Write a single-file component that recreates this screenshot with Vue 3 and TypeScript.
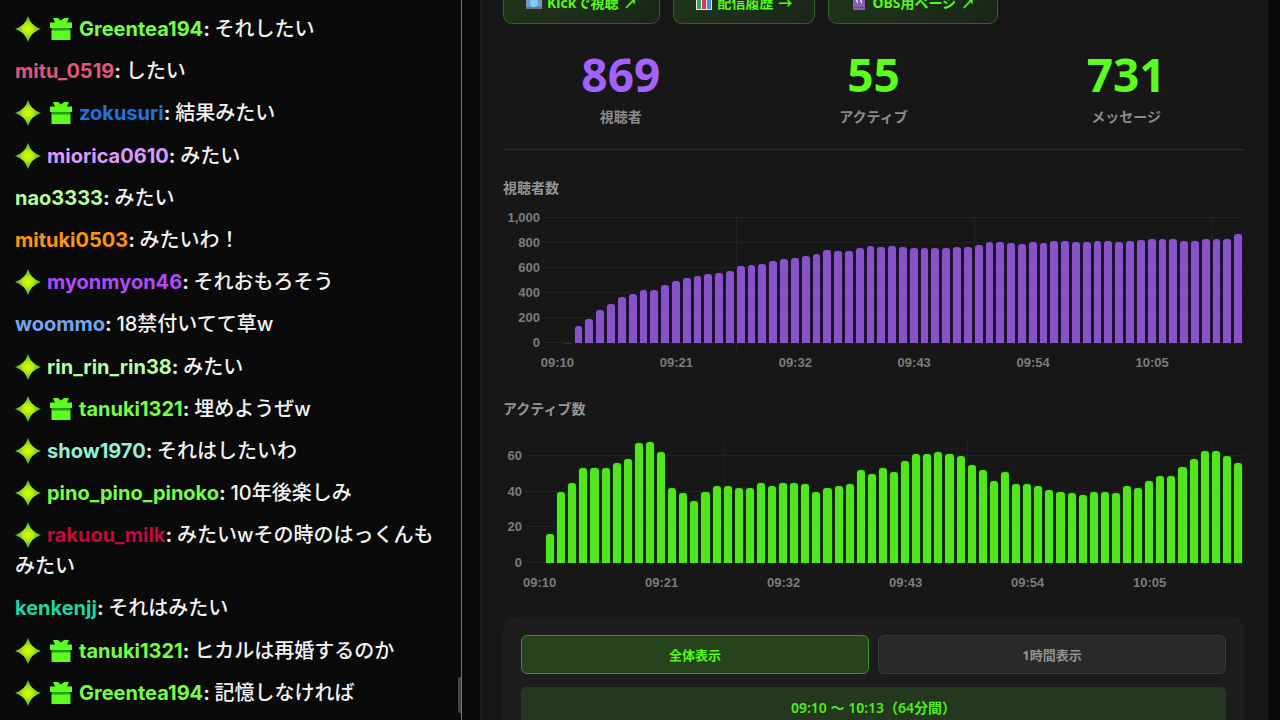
<script setup lang="ts">
interface Message { name: string; color: string; text: string; star?: boolean; gift?: boolean }
interface Chart {
  id: string
  title: string
  max: number
  values: number[]
  ticks: number[]
}

const messages: Message[] = [
  { name: 'Greentea194', color: '#75fd46', text: 'それしたい', star: true, gift: true },
  { name: 'mitu_0519', color: '#e0567f', text: 'したい' },
  { name: 'zokusuri', color: '#1f75e0', text: '結果みたい', star: true, gift: true },
  { name: 'miorica0610', color: '#d99bfb', text: 'みたい', star: true },
  { name: 'nao3333', color: '#b9fda0', text: 'みたい' },
  { name: 'mituki0503', color: '#fb9410', text: 'みたいわ！' },
  { name: 'myonmyon46', color: '#b04bfb', text: 'それおもろそう', star: true },
  { name: 'woommo', color: '#72a5ec', text: '18禁付いてて草w' },
  { name: 'rin_rin_rin38', color: '#b9fda0', text: 'みたい', star: true },
  { name: 'tanuki1321', color: '#75fd46', text: '埋めようぜw', star: true, gift: true },
  { name: 'show1970', color: '#93efd8', text: 'それはしたいわ', star: true },
  { name: 'pino_pino_pinoko', color: '#75fd46', text: '10年後楽しみ', star: true },
  { name: 'rakuou_milk', color: '#c20a3c', text: 'みたいwその時のはっくんもみたい', star: true },
  { name: 'kenkenjj', color: '#1fd6a0', text: 'それはみたい' },
  { name: 'tanuki1321', color: '#75fd46', text: 'ヒカルは再婚するのか', star: true, gift: true },
  { name: 'Greentea194', color: '#75fd46', text: '記憶しなければ', star: true, gift: true },
]

const stats = [
  { value: 869, label: '視聴者', tone: 'purple' },
  { value: 55, label: 'アクティブ', tone: 'green' },
  { value: 731, label: 'メッセージ', tone: 'green' },
]

const charts: Chart[] = [
  {
    id: 'viewers',
    title: '視聴者数',
    max: 1000,
    ticks: [1000, 800, 600, 400, 200, 0],
    values: [
      0, 4, 139, 195, 264, 315, 368, 392, 421, 421, 464, 493, 517, 539, 555, 563, 579, 613, 627, 635, 656, 669,
      683, 696, 712, 747, 736, 736, 760, 773, 771, 779, 765, 760, 760, 763, 760, 771, 768, 787, 805, 805, 797,
      792, 808, 803, 813, 816, 808, 811, 819, 813, 808, 819, 824, 832, 835, 832, 816, 819, 829, 829, 829, 869,
    ],
  },
  {
    id: 'active',
    title: 'アクティブ数',
    max: 70,
    ticks: [60, 40, 20, 0],
    values: [
      0, 16, 40, 45, 53, 53, 53, 56, 58, 67, 68, 62, 42, 39, 35, 40, 43, 43, 42, 42, 45, 43, 45, 45, 44, 40, 42,
      43, 44, 52, 50, 53, 51, 57, 61, 61, 62, 61, 60, 55, 52, 46, 51, 44, 44, 43, 41, 40, 39, 38, 40, 40, 39, 43,
      42, 46, 49, 49, 54, 58, 63, 63, 60, 56,
    ],
  },
]

const times = ['09:10', '09:21', '09:32', '09:43', '09:54', '10:05']
const verticals = [17, 39, 61]
const count = 64
const pct = (n: number): string => `${n * 100}%`
</script>

<template>
  <div class="page">
    <svg class="defs" aria-hidden="true">
      <defs>
        <radialGradient id="spark">
          <stop offset="0" stop-color="#dcff08" />
          <stop offset="0.35" stop-color="#b6ee12" />
          <stop offset="1" stop-color="#35b51e" />
        </radialGradient>
      </defs>
    </svg>

    <aside class="chat">
      <p v-for="(m, i) in messages" :key="i" class="message">
        <svg v-if="m.star" class="badge star" viewBox="0 0 26 26" aria-hidden="true">
          <path d="M13 0Q16 10 26 13Q16 16 13 26Q10 16 0 13Q10 10 13 0Z" fill="url(#spark)" />
        </svg>
        <svg v-if="m.gift" class="badge gift" viewBox="0 0 22 22" aria-hidden="true">
          <path d="M3 0H8L11 2.500L14 0H19L17 4.500H22V10H0V4.500H5Z" fill="#5cfc22" />
          <path d="M1.500 10H20.500V13H1.500Z" fill="#279c12" />
          <path d="M1.500 12.500H20.500V22H1.500Z" fill="#5cfc22" />
        </svg>
        <span class="name" :style="{ color: m.color }">{{ m.name }}</span><span class="colon">: </span>{{ m.text }}
      </p>
      <span class="thumb"></span>
    </aside>

    <main class="panel">
      <nav class="links">
        <a href="#kick" class="link">
          <svg class="emoji" viewBox="0 0 16 16" aria-hidden="true">
            <rect x="0" y="1" width="16" height="14" rx="1" fill="#8496a8" />
            <rect x="2" y="2" width="12" height="11" fill="#5a9edc" />
            <circle cx="8" cy="9" r="4" fill="#8ec8ee" />
            <path d="M0 13H16V15H0Z" fill="#79728c" />
          </svg>
          <span>Kickで視聴</span><span>↗</span>
        </a>
        <a href="#history" class="link">
          <svg class="emoji" viewBox="0 0 16 16" aria-hidden="true">
            <rect width="16" height="16" fill="#e8e8ee" />
            <rect x="1" y="6" width="4" height="9" fill="#37a35c" />
            <rect x="6" y="1" width="4" height="14" fill="#d9365a" />
            <rect x="11" y="4" width="4" height="11" fill="#4a8ad8" />
          </svg>
          <span>配信履歴</span><span>→</span>
        </a>
        <a href="#obs" class="link">
          <svg class="emoji" viewBox="0 0 16 16" aria-hidden="true">
            <rect x="2" y="0" width="12" height="16" rx="1" fill="#8462ac" />
            <path d="M5 5H7V9L6 10V8H5ZM9 5H11V9L10 10V8H9Z" fill="#d8c5ee" />
            <path d="M3 13H13V14H3Z" fill="#69488f" />
          </svg>
          <span>OBS用ページ</span><span>↗</span>
        </a>
      </nav>

      <section class="stats">
        <div v-for="s in stats" :key="s.label" class="stat">
          <strong :class="s.tone">{{ s.value }}</strong>
          <span>{{ s.label }}</span>
        </div>
      </section>

      <section v-for="c in charts" :key="c.id" class="chart" :class="c.id">
        <h2>{{ c.title }}</h2>
        <div class="plot">
          <div class="axis">
            <span v-for="t in c.ticks" :key="t" class="tick" :style="{ bottom: pct(t / c.max) }">{{ t.toLocaleString('en-US') }}</span>
          </div>
          <div class="area">
            <i v-for="t in c.ticks" :key="t" class="row" :style="{ bottom: pct(t / c.max) }"></i>
            <i v-for="v in verticals" :key="v" class="col" :style="{ left: pct(v / count) }"></i>
            <div class="bars">
              <div v-for="(v, i) in c.values" :key="i" class="slot">
                <div v-if="v > 0" class="bar" :class="{ faint: v / c.max < 0.01 }" :style="{ height: pct(v / c.max) }"></div>
              </div>
            </div>
            <span v-for="(t, i) in times" :key="t" class="time" :style="{ left: pct((i * 11 + 0.5) / count) }">{{ t }}</span>
          </div>
        </div>
      </section>

      <section class="range">
        <div class="modes">
          <button type="button" class="mode selected">全体表示</button>
          <button type="button" class="mode">1時間表示</button>
        </div>
        <div class="period">09:10 ～ 10:13（64分間）</div>
      </section>
    </main>
  </div>
</template>

<style>
html,
body {
  margin: 0;
  background: #0a0a0c;
  overflow: hidden;
}
</style>

<style scoped>
* {
  box-sizing: border-box;
}
.page {
  display: grid;
  grid-template-columns: minmax(0, 462px) minmax(0, 1fr);
  height: 100vh;
  overflow: hidden;
  color: #f2f2f2;
  font-family: "Noto Sans", "Noto Sans CJK JP", sans-serif;
}
.defs {
  position: absolute;
  width: 0;
  height: 0;
}
.chat {
  position: relative;
  display: flex;
  flex-direction: column;
  justify-content: space-between;
  height: 100vh;
  padding: 14px 24px 11px 15px;
  background: #0a0a0a;
  border-right: 1px solid #747474;
  font-family: Inter, "Noto Sans CJK JP", sans-serif;
  font-size: 20px;
  font-weight: 500;
  font-feature-settings: "calt" 0;
  line-height: 31px;
}
.message {
  margin: 0;
}
.badge {
  vertical-align: middle;
}
.star {
  width: 26px;
  height: 26px;
  margin: -3px 6px 0 0;
}
.gift {
  width: 22px;
  height: 22px;
  margin: -3px 7px 0 3px;
}
.name,
.colon {
  font-weight: 700;
}
.thumb {
  position: absolute;
  right: 0;
  bottom: 7px;
  width: 3px;
  height: 36px;
  border-radius: 2px 0 0 2px;
  background: #454545;
}
.panel {
  margin: -18px 12px 0 18px;
  padding: 0 23px 0 22px;
  background: #171717;
  border: solid #1e1e1e;
  border-width: 0 1px;
}
.links {
  display: flex;
  gap: 13px;
}
.link {
  display: flex;
  align-items: center;
  gap: 5px;
  height: 42px;
  padding: 0 22px 3px;
  border: 1px solid #2f6522;
  border-radius: 9px;
  background: linear-gradient(135deg, #20361b, #1a2618);
  color: #53fc18;
  font-size: 14px;
  font-weight: 700;
  text-decoration: none;
  white-space: nowrap;
}
.emoji {
  width: 16px;
  height: 16px;
}
.stats {
  display: grid;
  grid-template-columns: repeat(3, 1fr);
  gap: 17px;
  padding: 25px 0 21px;
  border-bottom: 1px solid #2c2c2c;
}
.stat {
  display: flex;
  flex-direction: column;
  align-items: center;
  gap: 6px;
  color: #8a8a8a;
  font-size: 14px;
  font-weight: 700;
  line-height: 22px;
}
.stat strong {
  font-size: 46px;
  font-weight: 700;
  line-height: 51px;
}
.stat .purple {
  color: #a362fb;
}
.stat .green {
  color: #5bfd20;
}
.chart {
  padding-top: 27px;
}
.chart h2 {
  margin: 0;
  color: #959595;
  font-size: 14px;
  font-weight: 700;
  line-height: 22px;
}
.plot {
  display: grid;
  height: 125px;
  color: #7c7c7c;
  font-family: "Liberation Sans", Arial, sans-serif;
  font-size: 13px;
  font-weight: 700;
  line-height: 16px;
}
.viewers .plot {
  grid-template-columns: 49px 1fr;
  margin: 19px 0 28px;
}
.active .plot {
  grid-template-columns: 31px 1fr;
  margin: 18px 0 54px;
}
.axis,
.area {
  position: relative;
}
.tick {
  position: absolute;
  right: 12px;
  transform: translateY(50%);
}
.row {
  position: absolute;
  right: 0;
  left: -8px;
  height: 1px;
  background: #222;
}
.col {
  position: absolute;
  top: 0;
  bottom: -8px;
  width: 1px;
  background: #222;
}
.bars {
  position: relative;
  display: flex;
  height: 100%;
}
.slot {
  display: flex;
  flex: 1;
  align-items: flex-end;
  padding: 0 2px 0 1px;
}
.bar {
  width: 100%;
  border-radius: 3px 3px 0 0;
}
.viewers .bar {
  background: #8653c8;
  box-shadow: 0 0 1px 1px #241338;
}
.viewers .faint {
  background: #2e2a33;
  box-shadow: none;
}
.active .bar {
  background: #51e51f;
  box-shadow: 0 0 1px 1px #12330a;
}
.time {
  position: absolute;
  top: calc(100% + 12px);
  transform: translateX(-50%);
}
.range {
  display: flex;
  flex-direction: column;
  gap: 13px;
  padding: 18px;
  border-radius: 12px;
  background: #1d1d1d;
}
.modes {
  display: grid;
  grid-template-columns: 1fr 1fr;
  gap: 9px;
}
.mode {
  height: 39px;
  border: 1px solid #3a3a3a;
  border-radius: 6px;
  background: #292929;
  color: #929292;
  font: 700 13px "Noto Sans", "Noto Sans CJK JP", sans-serif;
}
.selected {
  border-color: #3f8f26;
  background: #27431d;
  color: #53fc18;
}
.period {
  padding: 10px;
  border-radius: 5px 5px 0 0;
  background: #24371f;
  color: #4fee18;
  font-size: 14px;
  font-weight: 600;
  line-height: 21px;
  text-align: center;
}
</style>
